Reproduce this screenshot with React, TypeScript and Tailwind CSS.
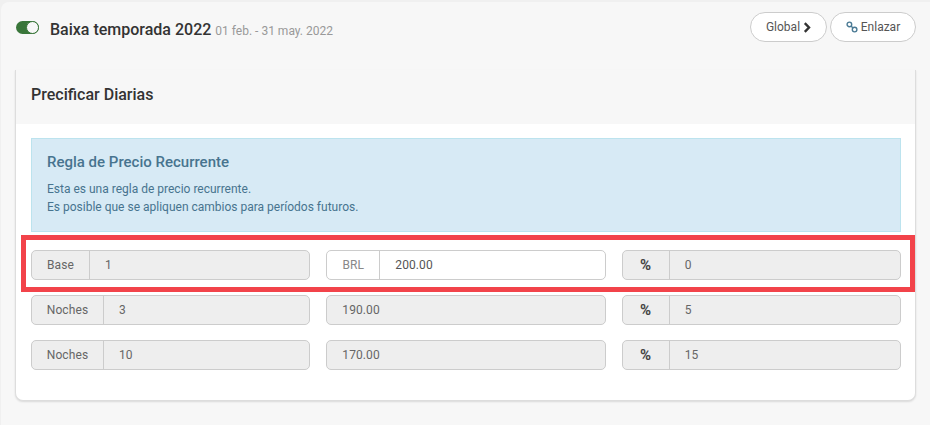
import React from 'react';

const rows = [
  { label: 'Base', qty: '1', price: '200.00', percent: '0', editable: true },
  { label: 'Noches', qty: '3', price: '190.00', percent: '5' },
  { label: 'Noches', qty: '10', price: '170.00', percent: '15' },
];

const Toggle = () => (
  <span className="relative block w-[23px] h-[13px] rounded-full bg-[#39763a]">
    <span className="absolute right-0 top-0 w-[13px] h-[13px] rounded-full bg-[#f7f7f7] border-[1.5px] border-[#39763a]" />
  </span>
);

const Field = ({
  addon,
  value,
  editable,
  bold,
  addonWidth,
}: {
  addon?: string;
  value: string;
  editable?: boolean;
  bold?: boolean;
  addonWidth?: string;
}) => (
  <div
    className={`flex h-[30px] rounded-[5px] border border-[#cccccc] text-[12px] tracking-[0.1px] leading-[28px] text-[#666666] ${
      editable ? 'bg-white' : 'bg-[#eeeeee]'
    }`}
  >
    {addon && (
      <span
        className={`shrink-0 text-center border-r border-[#cccccc] ${addonWidth} ${
          bold ? 'font-bold text-[15px] text-[#444444]' : ''
        } ${editable ? 'text-[#888888]' : ''}`}
      >
        {addon}
      </span>
    )}
    <span className={`pl-[15px] ${editable ? 'text-[#555555]' : ''}`}>{value}</span>
  </div>
);

export default function App() {
  return (
    <div className="w-[930px] h-[425px] overflow-hidden bg-[#f0f0f0] pt-[2px] pl-[1px] font-['Roboto',sans-serif]">
      <div className="h-full rounded-tl-[8px] bg-[#f7f7f7] pl-[14px] pr-[14px]">
        {/* season header */}
        <div className="flex items-start h-[68px]">
          <div className="pt-[19px] pl-[1px]">
            <Toggle />
          </div>
          <div className="ml-[11px] pt-[17px] flex items-baseline gap-[4px]">
            <h2 className="text-[16px] font-medium leading-[22px] text-[#333333]">Baixa temporada 2022</h2>
            <span className="text-[12px] text-[#999999]">01 feb. - 31 may. 2022</span>
          </div>
          <div className="ml-auto mt-[10px] flex gap-[3px]">
            <button className="flex items-center gap-[3px] h-[30px] w-[77px] justify-center rounded-full border border-[#cccccc] bg-white text-[12px] text-[#555555]">
              Global
              <svg width="8" height="11" viewBox="0 0 8 11" fill="none">
                <path d="M1.8 1.2 6 5.5 1.8 9.8" stroke="#333333" strokeWidth="2.4" />
              </svg>
            </button>
            <button className="flex items-center gap-[3px] h-[30px] w-[86px] justify-center rounded-full border border-[#cccccc] bg-white text-[12px] text-[#555555]">
              <svg width="12" height="12" viewBox="0 0 12 12" fill="none" stroke="#4a7a94" strokeWidth="1.4">
                <circle cx="3.4" cy="3.4" r="2.3" />
                <circle cx="8.6" cy="8.6" r="2.3" />
                <path d="M5 5 7 7" />
              </svg>
              Enlazar
            </button>
          </div>
        </div>

        {/* pricing card */}
        <div className="relative rounded-b-[8px] bg-white border-l border-r border-b border-[#dddddd] shadow-[0_1px_2px_rgba(0,0,0,0.12)] h-[331px]">
          <div className="h-[54px] bg-[#f7f7f7] pl-[15px] pb-[4px] flex items-center">
            <h3 className="text-[16px] font-medium text-[#333333]">Precificar Diarias</h3>
          </div>
          <div className="pl-[15px] pr-[14px] pt-[14px]">
            <div className="h-[94px] border border-[#bce3ee] bg-[#d7eaf5] px-[15px] pt-[13px] text-[#47748f]">
              <h4 className="text-[15px] font-medium leading-[20px]">Regla de Precio Recurrente</h4>
              <p className="mt-[8px] text-[12px] leading-[18px]">
                Esta es una regla de precio recurrente.
                <br />
                Es posible que se apliquen cambios para períodos futuros.
              </p>
            </div>
            <div className="mt-[18px] flex flex-col gap-[15px]">
              {rows.map((r, i) => (
                <div key={i} className="grid grid-cols-3 gap-[16px]">
                  <Field addon={r.label} value={r.qty} addonWidth={r.label === 'Base' ? 'w-[58px]' : 'w-[72px]'} />
                  <Field
                    addon={r.editable ? 'BRL' : undefined}
                    value={r.price}
                    editable={r.editable}
                    addonWidth="w-[53px]"
                  />
                  <Field addon="%" value={r.percent} bold addonWidth="w-[47px]" />
                </div>
              ))}
            </div>
          </div>
          {/* red highlight drawn over the first row */}
          <div className="absolute left-[5px] top-[165px] w-[894px] h-[57px] border-[5px] border-[#f2434a] pointer-events-none" />
        </div>
      </div>
    </div>
  );
}
